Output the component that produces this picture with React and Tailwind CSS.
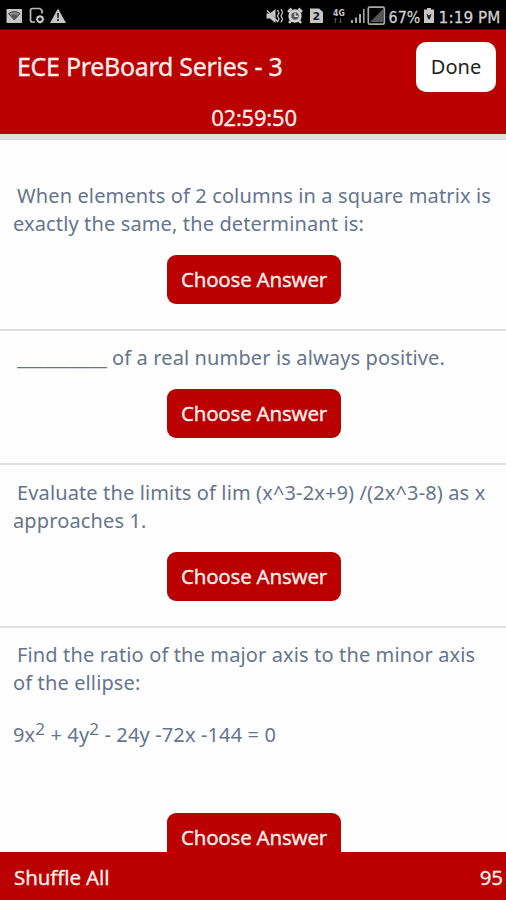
import React from "react";

function ChooseButton() {
  return (
    <button className="mr-[165px] ml-[167px] block h-[49px] w-[174px] shrink-0 rounded-[9px] bg-[#ba0000] text-center text-[20.500px] leading-[49px] tracking-[-0.22px] whitespace-nowrap text-[#fff0ee] [-webkit-text-stroke:0.3px_#fff0ee]">
      Choose Answer
    </button>
  );
}

function Line({ children, className = "" }) {
  return <div className={"h-7 whitespace-pre " + className}>{children}</div>;
}

function StatusBar() {
  return (
    <div className="h-[30px] shrink-0 border-b border-[#500000] bg-black">
      <svg width="506" height="29" viewBox="0 0 506 29" role="img" aria-label="Status bar">
        <g fill="#c6c6c6">
          <rect x="6.500" y="9" width="15.500" height="14" rx="1" />
          <path d="M8.500 13.500Q14.300 9.500 20 13.500L14.300 20z" fill="#858585" stroke="#444" strokeWidth="1" />
          <path d="M11 15.800l3.200 3.500 3.500-3.500q-3.500-2-6.700 0z" fill="#555" />
          <path d="M35 22h-2.500q-2 0-2-2v-9.500q0-2 2-2h7.500l2 2v3" fill="none" stroke="#bcbcbc" strokeWidth="1.700" />
          <circle cx="40" cy="19.300" r="2.700" fill="none" stroke="#d4d4d4" strokeWidth="2" />
          <path d="M40 15v8.600M35.700 19.300h8.600M37 16.300l6 6M43 16.300l-6 6" stroke="#bbb" strokeWidth="1" />
          <circle cx="40" cy="19.300" r="1.700" fill="#111" />
          <path d="M58 8.500L66 23H50z" />
          <path d="M57 13h2l-.4 5.200h-1.200zM57.100 19.300h1.800v1.800h-1.800z" fill="#222" />

          <path d="M266.500 13.500h3.500l5.500-4.500v14l-5.500-4.500h-3.500z" />
          <path d="M266.500 9.500L278 22" stroke="#000" strokeWidth="1" />
          <path d="M267 10.500L278 22" stroke="#c6c6c6" strokeWidth="1.500" />
          <path d="M277.500 10l1.500 3-1.500 3 1.500 3-1.500 3M281 9l1.500 3.500-1.500 3.500 1.500 3-1.500 3.500" fill="none" stroke="#bdbdbd" strokeWidth="1.300" />
          <circle cx="295" cy="16" r="5.200" fill="#555" stroke="#cfcfcf" strokeWidth="3" />
          <path d="M288 12l3.500-3.500M302 12l-3.500-3.500M291 20.500l-2 2.500M299 20.500l2 2.500" stroke="#c8c8c8" strokeWidth="2.500" />
          <path d="M295 12.800v3.600h3" fill="none" stroke="#ddd" strokeWidth="1.400" />
          <path d="M310 8.500h9l4 3.500V23h-13z" />
          <text x="316.500" y="20" textAnchor="middle" fill="#181818" fontSize="11" fontWeight="700" fontFamily="'DejaVu Sans',sans-serif">2</text>
          <text x="333" y="15.500" fontSize="8" fontWeight="700" textLength="12" lengthAdjust="spacingAndGlyphs" fontFamily="'DejaVu Sans',sans-serif">4G</text>
          <path d="M335.500 18v5M334.200 19.500l1.300-1.500 1.300 1.500M340.500 18v5M339.200 21.500l1.300 1.500 1.300-1.500" fill="none" stroke="#555" />
          <path d="M351 20h2v3h-2zM355 17.500h2V23h-2zM359 14h2v9h-2zM363 9h1.600v14H363z" fill="#a5a5a5" />
          <path d="M370 22L383 9v13z" fill="#555" />
          <rect x="368.300" y="7.200" width="16" height="17" rx="1.500" fill="none" stroke="#a9a9a9" strokeWidth="1.700" />
          <g fontSize="16.500" fontFamily="'DejaVu Sans',sans-serif" fill="#cfcfcf" stroke="#cfcfcf" strokeWidth=".3">
            <text x="388.500" y="22.600" textLength="32" lengthAdjust="spacingAndGlyphs">67%</text>
            <text x="438.500" y="22.600" textLength="35" lengthAdjust="spacingAndGlyphs">1:19</text>
            <text x="478" y="22.600" textLength="22.500" lengthAdjust="spacingAndGlyphs">PM</text>
          </g>
          <path d="M427 8h4v1.500h3V23h-10V9.500h3z" />
          <path d="M426.500 13.500l2.500 2 2.500-2-1 4-1.500 2.500-1.500-2.500z" fill="#222" />
        </g>
      </svg>
    </div>
  );
}

export default function App() {
  return (
    <div className="flex h-[900px] w-[506px] flex-col overflow-hidden bg-[#fefefe] font-['Noto_Sans',sans-serif] text-[20px] leading-7 tracking-[0.13px] text-[#66748d]">
      <StatusBar />
      <header className="h-[104px] shrink-0 bg-[#ba0000] text-[#fff0ee]">
        <div className="flex items-start justify-between pt-3 pr-[10px] pl-[17px]">
          <h1 className="pt-[6px] text-[25px] leading-9 tracking-[-0.3px] whitespace-nowrap [-webkit-text-stroke:0.3px_#fff0ee]">ECE PreBoard Series - 3</h1>
          <button className="h-[50px] w-20 rounded-[10px] bg-white text-center text-[20px] leading-[50px] tracking-normal text-[#222]">
            Done
          </button>
        </div>
        <div className="pt-[11px] pl-[2px] text-center text-[22px] leading-7 tracking-[-0.2px] [-webkit-text-stroke:0.3px_#fff0ee]">02:59:50</div>
      </header>
      <div className="h-[6px] shrink-0 border-b border-[#d5d5d5] bg-[#e0e0e0]" />
      <main className="min-h-0 flex-1 overflow-hidden">
        <section className="h-[191px] border-b-2 border-[#e0e0e0] pt-[42px]">
          <div className="mb-[17px] pl-[13px]">
            <Line className="pl-1">When elements of 2 columns in a square matrix is</Line>
            <Line>exactly the same, the determinant is:</Line>
          </div>
          <ChooseButton />
        </section>
        <section className="h-[134px] border-b-2 border-[#e0e0e0] pt-[13px]">
          <div className="mb-[17px] pl-[13px]">
            <Line className="flex pl-1">
              <span className="w-[95px]">__________</span>
              <span>of a real number is always positive.</span>
            </Line>
          </div>
          <ChooseButton />
        </section>
        <section className="h-[163px] border-b-2 border-[#e0e0e0] pt-[14px]">
          <div className="mb-[17px] pl-[13px]">
            <Line className="pl-1">Evaluate the limits of lim (x^3-2x+9) /(2x^3-8) as x</Line>
            <Line>approaches 1.</Line>
          </div>
          <ChooseButton />
        </section>
        <section className="pt-[13px]">
          <div className="mb-[64px] pl-[13px]">
            <Line className="pl-1">Find the ratio of the major axis to the minor axis</Line>
            <Line className="mb-6">of the ellipse:</Line>
            <Line>
              9x<sup className="top-[-7px] text-[17px] leading-none">2</sup> + 4y<sup className="top-[-7px] text-[17px] leading-none">2</sup> - 24y -72x -144 = 0
            </Line>
          </div>
          <ChooseButton />
        </section>
      </main>
      <footer className="flex h-12 shrink-0 items-center justify-between bg-[#ba0000] pt-px pr-[3px] pl-[14px] text-[20.500px] tracking-[-0.1px] text-[#fff0ee] [-webkit-text-stroke:0.3px_#fff0ee]">
        <span>Shuffle All</span>
        <span>95</span>
      </footer>
    </div>
  );
}
